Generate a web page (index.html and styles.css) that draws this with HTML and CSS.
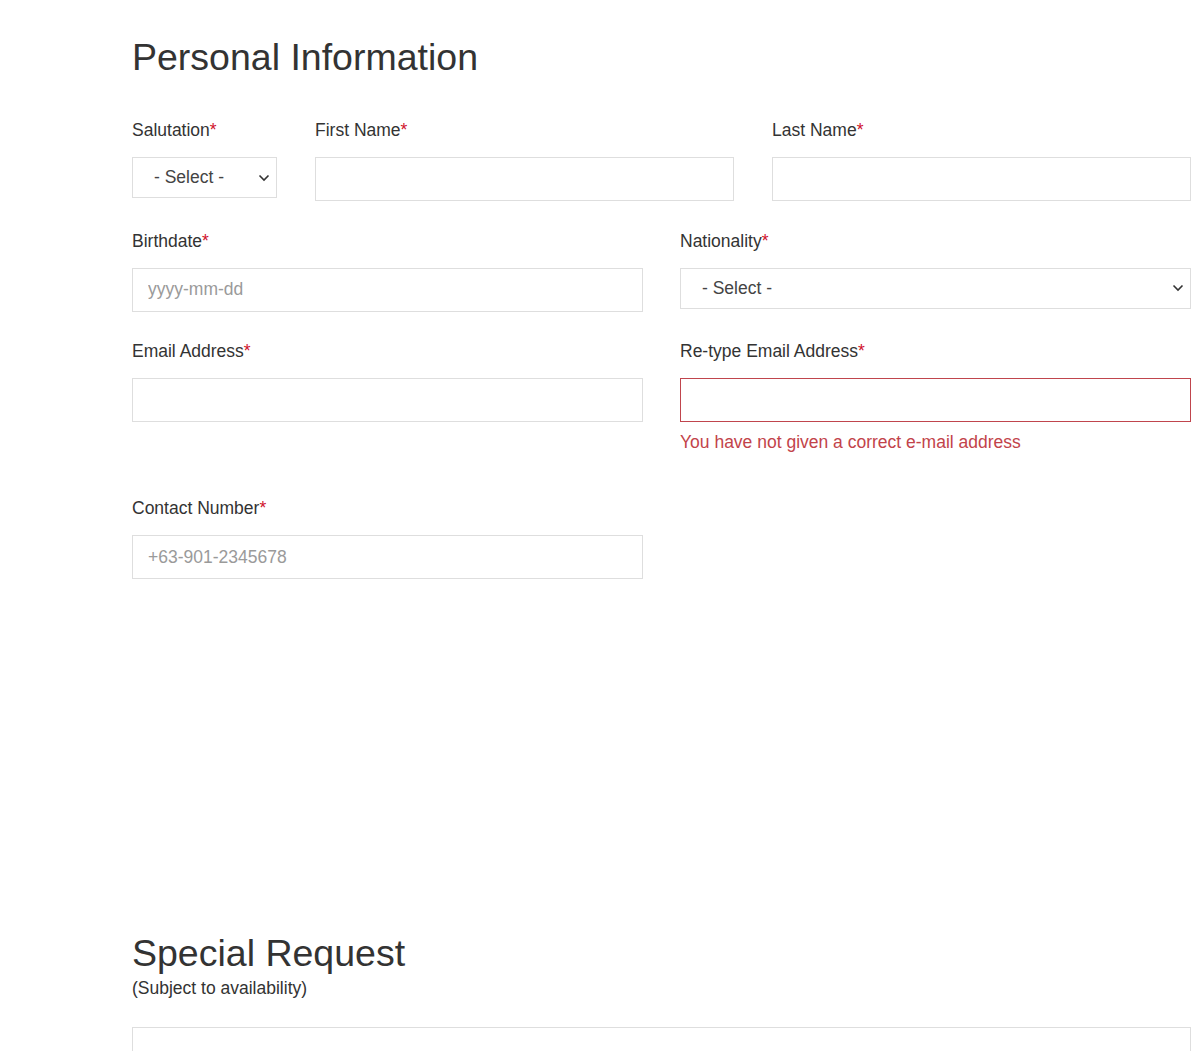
FILE: index.html
```html
<!DOCTYPE html>
<html lang="en">
<head>
<meta charset="utf-8">
<title>Personal Information</title>
<link rel="stylesheet" href="styles.css">
</head>
<body>
<div class="page">
  <h1 class="title">Personal Information</h1>

  <div class="row row-three">
    <div class="field">
      <label class="label">Salutation<span class="req">*</span></label>
      <div class="select select-short">
        <span class="select-text">- Select -</span>
        <svg class="chevron" width="12" height="8" viewBox="0 0 12 8"><path d="M1.5 1.5 L6 6 L10.5 1.5" fill="none" stroke="#333" stroke-width="1.6"/></svg>
      </div>
    </div>
    <div class="field">
      <label class="label">First Name<span class="req">*</span></label>
      <input class="input" type="text">
    </div>
    <div class="field">
      <label class="label">Last Name<span class="req">*</span></label>
      <input class="input" type="text">
    </div>
  </div>

  <div class="row row-two">
    <div class="field">
      <label class="label">Birthdate<span class="req">*</span></label>
      <input class="input" type="text" placeholder="yyyy-mm-dd">
    </div>
    <div class="field">
      <label class="label">Nationality<span class="req">*</span></label>
      <div class="select">
        <span class="select-text">- Select -</span>
        <svg class="chevron" width="12" height="8" viewBox="0 0 12 8"><path d="M1.5 1.5 L6 6 L10.5 1.5" fill="none" stroke="#333" stroke-width="1.6"/></svg>
      </div>
    </div>
  </div>

  <div class="row row-two">
    <div class="field">
      <label class="label">Email Address<span class="req">*</span></label>
      <input class="input" type="text">
    </div>
    <div class="field">
      <label class="label">Re-type Email Address<span class="req">*</span></label>
      <input class="input input-error" type="text">
      <div class="error">You have not given a correct e-mail address</div>
    </div>
  </div>

  <div class="row row-two row-after-error">
    <div class="field">
      <label class="label">Contact Number<span class="req">*</span></label>
      <input class="input" type="text" placeholder="+63-901-2345678">
    </div>
    <div class="field"></div>
  </div>

  <h1 class="title title-special">Special Request</h1>
  <div class="subtitle">(Subject to availability)</div>
  <textarea class="textarea"></textarea>
</div>
</body>
</html>
```
FILE: styles.css
```css
html, body {
  margin: 0;
  padding: 0;
  background: #ffffff;
}

body {
  font-family: "Liberation Sans", Arial, sans-serif;
  color: #333333;
}

.page {
  width: 1059px;
  padding: 37px 12px 0 132px;
}

.title {
  margin: 0;
  font-size: 37.5px;
  line-height: 41px;
  font-weight: 400;
  color: #333333;
}

.row {
  display: grid;
  margin-top: 27.5px;
}

.row-three {
  grid-template-columns: 145px 1fr 1fr;
  column-gap: 38px;
  margin-top: 40px;
}

.row-two {
  grid-template-columns: 1fr 1fr;
  column-gap: 37px;
}

.row-after-error {
  margin-top: 42px;
}

.field {
  display: flex;
  flex-direction: column;
  align-items: stretch;
}

.label {
  display: block;
  font-size: 17.5px;
  line-height: 24px;
  margin-bottom: 15px;
  color: #333333;
}

.req {
  color: #d0112b;
}

.input {
  box-sizing: border-box;
  height: 44px;
  width: 100%;
  border: 1px solid #dedede;
  background: #ffffff;
  padding: 0 15px;
  margin: 0;
  font-family: "Liberation Sans", Arial, sans-serif;
  font-size: 17.5px;
  color: #333333;
  outline: none;
  border-radius: 0;
}

.input::placeholder {
  color: #9a9a9a;
  opacity: 1;
}

.input-error {
  border-color: #c0454d;
}

.error {
  margin-top: 8px;
  font-size: 17.5px;
  line-height: 24px;
  color: #c2434a;
}

.select {
  box-sizing: border-box;
  height: 41px;
  border: 1px solid #dedede;
  background: #ffffff;
  display: flex;
  align-items: center;
  justify-content: space-between;
  padding: 0 6px 0 21px;
}

.select-text {
  font-size: 17.5px;
  color: #444444;
}

.chevron {
  display: block;
  flex: none;
}

.title-special {
  margin-top: 354px;
}

.subtitle {
  margin-top: 2px;
  font-size: 17.5px;
  line-height: 24px;
  color: #333333;
}

.textarea {
  display: block;
  box-sizing: border-box;
  width: 100%;
  height: 120px;
  margin-top: 27px;
  border: 1px solid #dedede;
  resize: none;
  outline: none;
  font-family: "Liberation Sans", Arial, sans-serif;
}
```
